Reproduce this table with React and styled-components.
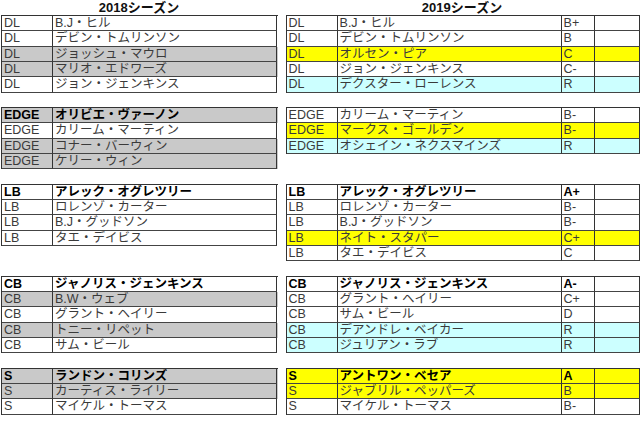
import React from "react";
import styled, { createGlobalStyle } from "styled-components";

const PITCH = 46 / 3;

const Global = createGlobalStyle`
  html, body { margin: 0; padding: 0; background: #fff; }
  body {
    font-family: "Liberation Sans", "Noto Sans CJK JP", sans-serif;
    width: 640px;
    height: 422px;
    overflow: hidden;
  }
`;

const FILLS = {
  none: "#ffffff",
  gray: "#c9c9c9",
  yellow: "#ffff00",
  cyan: "#ccffff",
};

const Page = styled.div`
  display: flex;
  flex-direction: column;
  padding-left: 1px;
`;

const TitleBar = styled.div`
  display: flex;
  gap: 8px;
  height: 15px;
`;

const Title = styled.div`
  width: ${(p) => p.$w}px;
  text-align: center;
  font-weight: bold;
  font-size: 13px;
  line-height: 15px;
  color: #111;
`;

const Section = styled.div`
  display: flex;
  align-items: flex-start;
  gap: 8px;
  height: ${(p) => p.$rows * PITCH}px;
`;

const Table = styled.div`
  display: flex;
  flex-direction: column;
  width: ${(p) => p.$w}px;
  border-top: 1px solid #333;
  border-left: 1px solid #333;
`;

const Row = styled.div`
  display: grid;
  grid-template-columns: ${(p) => p.$cols};
  height: ${PITCH}px;
  background: ${(p) => FILLS[p.$fill || "none"]};
  font-weight: ${(p) => (p.$bold ? "bold" : "normal")};
  color: ${(p) => (p.$bold ? "#000" : "#3a3a3a")};
`;

const Cell = styled.div`
  box-sizing: border-box;
  border-right: 1px solid #333;
  border-bottom: 1px solid #444;
  padding-left: 2px;
  font-size: 12.5px;
  line-height: 15px;
  white-space: nowrap;
  overflow: hidden;
`;

const LEFT_COLS = "51px 224px";
const RIGHT_COLS = "51px 224px 33px 45px";

const sections = [
  {
    rows: 6,
    left: [
      ["DL", "B.J・ヒル"],
      ["DL", "デビン・トムリンソン"],
      ["DL", "ジョッシュ・マウロ", "gray"],
      ["DL", "マリオ・エドワーズ", "gray"],
      ["DL", "ジョン・ジェンキンス"],
    ],
    right: [
      ["DL", "B.J・ヒル", "B+"],
      ["DL", "デビン・トムリンソン", "B"],
      ["DL", "オルセン・ピア", "C", "yellow"],
      ["DL", "ジョン・ジェンキンス", "C-"],
      ["DL", "デクスター・ローレンス", "R", "cyan"],
    ],
  },
  {
    rows: 5,
    left: [
      ["EDGE", "オリビエ・ヴァーノン", "gray", true],
      ["EDGE", "カリーム・マーティン"],
      ["EDGE", "コナー・バーウィン", "gray"],
      ["EDGE", "ケリー・ウィン", "gray"],
    ],
    right: [
      ["EDGE", "カリーム・マーティン", "B-"],
      ["EDGE", "マークス・ゴールデン", "B-", "yellow"],
      ["EDGE", "オシェイン・ネクスマインズ", "R", "cyan"],
    ],
  },
  {
    rows: 6,
    left: [
      ["LB", "アレック・オグレツリー", "none", true],
      ["LB", "ロレンゾ・カーター"],
      ["LB", "B.J・グッドソン"],
      ["LB", "タエ・デイビス"],
    ],
    right: [
      ["LB", "アレック・オグレツリー", "A+", "none", true],
      ["LB", "ロレンゾ・カーター", "B-"],
      ["LB", "B.J・グッドソン", "B-"],
      ["LB", "ネイト・スタパー", "C+", "yellow"],
      ["LB", "タエ・デイビス", "C"],
    ],
  },
  {
    rows: 6,
    left: [
      ["CB", "ジャノリス・ジェンキンス", "none", true],
      ["CB", "B.W・ウェブ", "gray"],
      ["CB", "グラント・ヘイリー"],
      ["CB", "トニー・リペット", "gray"],
      ["CB", "サム・ビール"],
    ],
    right: [
      ["CB", "ジャノリス・ジェンキンス", "A-", "none", true],
      ["CB", "グラント・ヘイリー", "C+"],
      ["CB", "サム・ビール", "D"],
      ["CB", "デアンドレ・ベイカー", "R", "cyan"],
      ["CB", "ジュリアン・ラブ", "R", "cyan"],
    ],
  },
  {
    rows: 4,
    left: [
      ["S", "ランドン・コリンズ", "gray", true],
      ["S", "カーティス・ライリー", "gray"],
      ["S", "マイケル・トーマス"],
    ],
    right: [
      ["S", "アントワン・ベセア", "A", "yellow", true],
      ["S", "ジャブリル・ペッパーズ", "B", "yellow"],
      ["S", "マイケル・トーマス", "B-"],
    ],
  },
];

export default function App() {
  return (
    <>
      <Global />
      <Page>
        <TitleBar>
          <Title $w={276}>2018シーズン</Title>
          <Title $w={354}>2019シーズン</Title>
        </TitleBar>
        {sections.map((s, i) => (
          <Section key={i} $rows={s.rows}>
            <Table $w={276}>
              {s.left.map(([pos, name, fill, bold], j) => (
                <Row key={j} $cols={LEFT_COLS} $fill={fill} $bold={bold}>
                  <Cell>{pos}</Cell>
                  <Cell>{name}</Cell>
                </Row>
              ))}
            </Table>
            <Table $w={354}>
              {s.right.map(([pos, name, grade, fill, bold], j) => (
                <Row key={j} $cols={RIGHT_COLS} $fill={fill} $bold={bold}>
                  <Cell>{pos}</Cell>
                  <Cell>{name}</Cell>
                  <Cell>{grade}</Cell>
                  <Cell></Cell>
                </Row>
              ))}
            </Table>
          </Section>
        ))}
      </Page>
    </>
  );
}
